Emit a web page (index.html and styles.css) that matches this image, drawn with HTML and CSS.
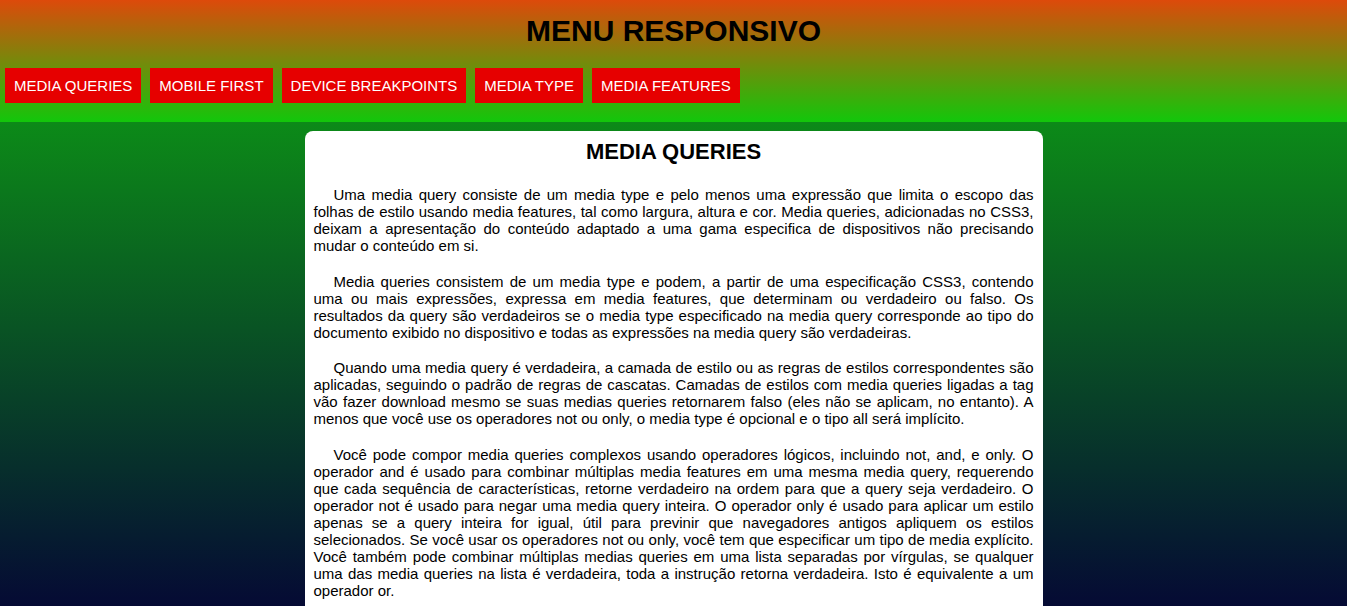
FILE: index.html
```html
<!DOCTYPE html>
<html lang="pt-BR">
<head>
<meta charset="utf-8">
<title>Menu Responsivo</title>
<link rel="stylesheet" href="styles.css">
</head>
<body>
<header class="topo">
  <h1 class="titulo">MENU RESPONSIVO</h1>
  <nav class="menu">
    <a class="menu-item" href="#">MEDIA QUERIES</a>
    <a class="menu-item" href="#">MOBILE FIRST</a>
    <a class="menu-item" href="#">DEVICE BREAKPOINTS</a>
    <a class="menu-item" href="#">MEDIA TYPE</a>
    <a class="menu-item" href="#">MEDIA FEATURES</a>
  </nav>
</header>
<main class="conteudo">
  <article class="cartao">
    <h2 class="cartao-titulo">MEDIA QUERIES</h2>
    <p class="texto">Uma media query consiste de um media type e pelo menos uma expressão que limita o escopo das folhas de estilo usando media features, tal como largura, altura e cor. Media queries, adicionadas no CSS3, deixam a apresentação do conteúdo adaptado a uma gama especifica de dispositivos não precisando mudar o conteúdo em si.</p>
    <p class="texto">Media queries consistem de um media type e podem, a partir de uma especificação CSS3, contendo uma ou mais expressões, expressa em media features, que determinam ou verdadeiro ou falso. Os resultados da query são verdadeiros se o media type especificado na media query corresponde ao tipo do documento exibido no dispositivo e todas as expressões na media query são verdadeiras.</p>
    <p class="texto">Quando uma media query é verdadeira, a camada de estilo ou as regras de estilos correspondentes são aplicadas, seguindo o padrão de regras de cascatas. Camadas de estilos com media queries ligadas a tag vão fazer download mesmo se suas medias queries retornarem falso (eles não se aplicam, no entanto). A menos que você use os operadores not ou only, o media type é opcional e o tipo all será implícito.</p>
    <p class="texto">Você pode compor media queries complexos usando operadores lógicos, incluindo not, and, e only. O operador and é usado para combinar múltiplas media features em uma mesma media query, requerendo que cada sequência de características, retorne verdadeiro na ordem para que a query seja verdadeiro. O operador not é usado para negar uma media query inteira. O operador only é usado para aplicar um estilo apenas se a query inteira for igual, útil para previnir que navegadores antigos apliquem os estilos selecionados. Se você usar os operadores not ou only, você tem que especificar um tipo de media explícito. Você também pode combinar múltiplas medias queries em uma lista separadas por vírgulas, se qualquer uma das media queries na lista é verdadeira, toda a instrução retorna verdadeira. Isto é equivalente a um operador or.</p>
  </article>
</main>
</body>
</html>
```

FILE: styles.css
```css
html, body {
  margin: 0;
  padding: 0;
}

body {
  font-family: "Liberation Sans", Arial, sans-serif;
  color: #000;
  min-height: 100vh;
  background: linear-gradient(to bottom, #0c8a18 0, #0c8a18 122px, #050a34 100%) fixed;
}

.topo {
  background: linear-gradient(to bottom, #dd4a0b 0%, #12c70b 100%);
  padding: 14px 0 19px;
}

.titulo {
  margin: 0 0 20px;
  text-align: center;
  font-size: 30px;
  line-height: 34px;
  font-weight: bold;
}

.menu {
  display: flex;
  gap: 9px;
  padding-left: 5px;
}

.menu-item {
  display: block;
  background: #e60000;
  color: #fff;
  text-decoration: none;
  font-size: 15px;
  line-height: 17px;
  padding: 9px;
}

.conteudo {
  padding-top: 9px;
}

.cartao {
  width: 738px;
  box-sizing: border-box;
  margin: 0 auto;
  background: #fff;
  border-radius: 8px 8px 0 0;
  padding: 8px 9px 16px;
}

.cartao-titulo {
  margin: 0 0 21px;
  text-align: center;
  font-size: 22px;
  font-weight: bold;
}

.texto {
  margin: 0 0 18.5px;
  font-size: 15px;
  line-height: 17px;
  text-align: justify;
  text-indent: 20px;
}
```
